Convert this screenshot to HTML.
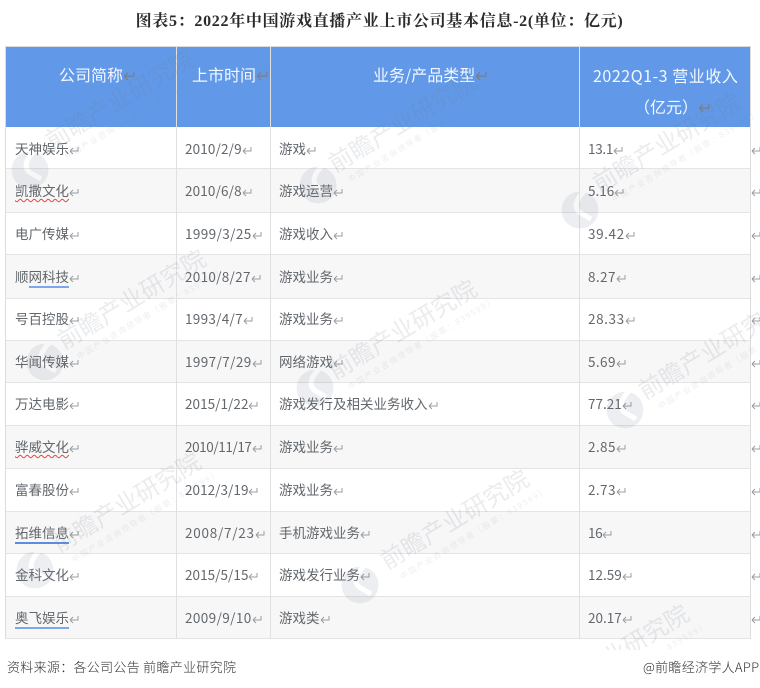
<!DOCTYPE html>
<html lang="zh"><head><meta charset="utf-8"><title>图表5</title>
<style>
html,body{margin:0;padding:0;background:#fff}
body{width:760px;height:688px;overflow:hidden;position:relative;font-family:"Liberation Sans","Noto Sans CJK SC",sans-serif}
.title{position:absolute;left:0;top:10px;width:759px;text-align:center;font:bold 16px/24px "Liberation Serif","Noto Serif CJK SC",serif;color:#2b2b2b;letter-spacing:.7px;white-space:nowrap}
.wrap{position:absolute;left:0;top:0;width:760px;height:688px;filter:blur(.35px)}
.hd{position:absolute;left:6px;top:47px;width:744px;height:80px;background:#6199e8}
.tb{position:absolute;left:5px;top:46px;width:746px;height:593px;border:1px solid #dcdcdc;box-sizing:border-box}
.r{position:absolute;left:6px;width:744px;border-bottom:1.5px solid #e4e4e4;box-sizing:border-box}
.g{background:#f7f7f7}
.v{position:absolute;top:47px;height:592px;width:1.4px;background:#e0e0e0}
.t{position:absolute;font:13.5px/20px "Noto Sans CJK SC",sans-serif;font-weight:400;color:#62676c;white-space:nowrap}
.h{position:absolute;font:16px/22px "Noto Sans CJK SC",sans-serif;font-weight:400;color:#f4f8ff;white-space:nowrap}
svg.a{display:inline-block;width:10px;height:10px;vertical-align:-1px;margin-left:0;fill:none;stroke:#9a9da2;stroke-width:1}
.h svg.a{width:12px;height:12px;stroke:#78808e;stroke-width:1.1;vertical-align:0}
.rd{text-decoration:underline wavy #e8433f;text-decoration-thickness:1px;text-underline-offset:2px}
.bl{border-bottom:2px solid #7ea6ea;padding-bottom:0}
.foot{position:absolute;font:13px/18px "WenQuanYi Zen Hei","Noto Sans CJK SC",sans-serif;font-weight:300;color:#333;white-space:nowrap}
.ov{position:absolute;left:0;top:0}
.ov text{font-family:"Noto Sans CJK SC",sans-serif}
.big{font-size:24px;font-weight:400;fill:#737d90;opacity:.15}
.sm{font-size:8px;fill:#737d90;opacity:.13;letter-spacing:1.6px}
.lg{fill:#737d90;opacity:.13}
</style></head><body>
<div class="title">图表5：2022年中国游戏直播产业上市公司基本信息-2(单位：亿元)</div>
<div class="wrap">
<div class="tb"></div>
<div class="hd"></div>
<div class="r" style="top:127px;height:42px"></div>
<div class="r g" style="top:169px;height:43.5px"></div>
<div class="r" style="top:212.5px;height:42.5px"></div>
<div class="r g" style="top:255px;height:43.5px"></div>
<div class="r" style="top:298.5px;height:42.5px"></div>
<div class="r g" style="top:341px;height:42px"></div>
<div class="r" style="top:383px;height:43px"></div>
<div class="r g" style="top:426px;height:43px"></div>
<div class="r" style="top:469px;height:42.5px"></div>
<div class="r g" style="top:511.5px;height:42.5px"></div>
<div class="r" style="top:554px;height:42.5px"></div>
<div class="r g" style="top:596.5px;height:42px"></div>
<div class="v" style="left:176px"></div>
<div class="v" style="left:270px"></div>
<div class="v" style="left:579px"></div>

<div class="h" style="left:59px;top:63px">公司简称<svg class="a" viewBox="0 0 10 10"><path d="M9 2V6H1M1 6L4 3M1 6L4 9"/></svg></div>
<div class="h" style="left:192px;top:63px">上市时间<svg class="a" viewBox="0 0 10 10"><path d="M9 2V6H1M1 6L4 3M1 6L4 9"/></svg></div>
<div class="h" style="left:373px;top:63px">业务/产品类型<svg class="a" viewBox="0 0 10 10"><path d="M9 2V6H1M1 6L4 3M1 6L4 9"/></svg></div>
<div class="h" style="left:593px;top:64px;letter-spacing:.55px">2022Q1-3 营业收入</div>
<div class="h" style="left:634px;top:95px">（亿元）<svg class="a" viewBox="0 0 10 10"><path d="M9 2V6H1M1 6L4 3M1 6L4 9"/></svg></div>

<div class="t" style="left:15px;top:138px">天神娱乐<svg class="a" viewBox="0 0 10 10"><path d="M9 2V6H1M1 6L4 3M1 6L4 9"/></svg></div>
<div class="t" style="left:185px;top:138px;letter-spacing:.15px">2010/2/9<svg class="a" viewBox="0 0 10 10"><path d="M9 2V6H1M1 6L4 3M1 6L4 9"/></svg></div>
<div class="t" style="left:279px;top:138px">游戏<svg class="a" viewBox="0 0 10 10"><path d="M9 2V6H1M1 6L4 3M1 6L4 9"/></svg></div>
<div class="t" style="left:588px;top:138px;letter-spacing:-.3px">13.1<svg class="a" viewBox="0 0 10 10"><path d="M9 2V6H1M1 6L4 3M1 6L4 9"/></svg></div>
<div class="t" style="left:751px;top:138px"><svg class="a" viewBox="0 0 10 10"><path d="M9 2V6H1M1 6L4 3M1 6L4 9"/></svg></div>

<div class="t" style="left:15px;top:180px"><span class="rd">凯撒文化</span><svg class="a" viewBox="0 0 10 10"><path d="M9 2V6H1M1 6L4 3M1 6L4 9"/></svg></div>
<div class="t" style="left:185px;top:180px;letter-spacing:.15px">2010/6/8<svg class="a" viewBox="0 0 10 10"><path d="M9 2V6H1M1 6L4 3M1 6L4 9"/></svg></div>
<div class="t" style="left:279px;top:180px">游戏运营<svg class="a" viewBox="0 0 10 10"><path d="M9 2V6H1M1 6L4 3M1 6L4 9"/></svg></div>
<div class="t" style="left:588px;top:180px">5.16<svg class="a" viewBox="0 0 10 10"><path d="M9 2V6H1M1 6L4 3M1 6L4 9"/></svg></div>
<div class="t" style="left:751px;top:180px"><svg class="a" viewBox="0 0 10 10"><path d="M9 2V6H1M1 6L4 3M1 6L4 9"/></svg></div>

<div class="t" style="left:15px;top:223px">电广传媒<svg class="a" viewBox="0 0 10 10"><path d="M9 2V6H1M1 6L4 3M1 6L4 9"/></svg></div>
<div class="t" style="left:185px;top:223px;letter-spacing:.4px">1999/3/25<svg class="a" viewBox="0 0 10 10"><path d="M9 2V6H1M1 6L4 3M1 6L4 9"/></svg></div>
<div class="t" style="left:279px;top:223px">游戏收入<svg class="a" viewBox="0 0 10 10"><path d="M9 2V6H1M1 6L4 3M1 6L4 9"/></svg></div>
<div class="t" style="left:588px;top:223px;letter-spacing:.6px">39.42<svg class="a" viewBox="0 0 10 10"><path d="M9 2V6H1M1 6L4 3M1 6L4 9"/></svg></div>
<div class="t" style="left:751px;top:223px"><svg class="a" viewBox="0 0 10 10"><path d="M9 2V6H1M1 6L4 3M1 6L4 9"/></svg></div>

<div class="t" style="left:15px;top:266px">顺<span class="bl">网科技</span><svg class="a" viewBox="0 0 10 10"><path d="M9 2V6H1M1 6L4 3M1 6L4 9"/></svg></div>
<div class="t" style="left:185px;top:266px;letter-spacing:.3px">2010/8/27<svg class="a" viewBox="0 0 10 10"><path d="M9 2V6H1M1 6L4 3M1 6L4 9"/></svg></div>
<div class="t" style="left:279px;top:266px">游戏业务<svg class="a" viewBox="0 0 10 10"><path d="M9 2V6H1M1 6L4 3M1 6L4 9"/></svg></div>
<div class="t" style="left:588px;top:266px;letter-spacing:.4px">8.27<svg class="a" viewBox="0 0 10 10"><path d="M9 2V6H1M1 6L4 3M1 6L4 9"/></svg></div>
<div class="t" style="left:751px;top:266px"><svg class="a" viewBox="0 0 10 10"><path d="M9 2V6H1M1 6L4 3M1 6L4 9"/></svg></div>

<div class="t" style="left:15px;top:308px">号百控股<svg class="a" viewBox="0 0 10 10"><path d="M9 2V6H1M1 6L4 3M1 6L4 9"/></svg></div>
<div class="t" style="left:185px;top:308px;letter-spacing:.3px">1993/4/7<svg class="a" viewBox="0 0 10 10"><path d="M9 2V6H1M1 6L4 3M1 6L4 9"/></svg></div>
<div class="t" style="left:279px;top:308px">游戏业务<svg class="a" viewBox="0 0 10 10"><path d="M9 2V6H1M1 6L4 3M1 6L4 9"/></svg></div>
<div class="t" style="left:588px;top:308px;letter-spacing:.6px">28.33<svg class="a" viewBox="0 0 10 10"><path d="M9 2V6H1M1 6L4 3M1 6L4 9"/></svg></div>
<div class="t" style="left:751px;top:308px"><svg class="a" viewBox="0 0 10 10"><path d="M9 2V6H1M1 6L4 3M1 6L4 9"/></svg></div>

<div class="t" style="left:15px;top:351px">华闻传媒<svg class="a" viewBox="0 0 10 10"><path d="M9 2V6H1M1 6L4 3M1 6L4 9"/></svg></div>
<div class="t" style="left:185px;top:351px;letter-spacing:.4px">1997/7/29<svg class="a" viewBox="0 0 10 10"><path d="M9 2V6H1M1 6L4 3M1 6L4 9"/></svg></div>
<div class="t" style="left:279px;top:351px">网络游戏<svg class="a" viewBox="0 0 10 10"><path d="M9 2V6H1M1 6L4 3M1 6L4 9"/></svg></div>
<div class="t" style="left:588px;top:351px;letter-spacing:.4px">5.69<svg class="a" viewBox="0 0 10 10"><path d="M9 2V6H1M1 6L4 3M1 6L4 9"/></svg></div>
<div class="t" style="left:751px;top:351px"><svg class="a" viewBox="0 0 10 10"><path d="M9 2V6H1M1 6L4 3M1 6L4 9"/></svg></div>

<div class="t" style="left:15px;top:393px">万达电影<svg class="a" viewBox="0 0 10 10"><path d="M9 2V6H1M1 6L4 3M1 6L4 9"/></svg></div>
<div class="t" style="left:185px;top:393px;letter-spacing:.05px">2015/1/22<svg class="a" viewBox="0 0 10 10"><path d="M9 2V6H1M1 6L4 3M1 6L4 9"/></svg></div>
<div class="t" style="left:279px;top:393px">游戏发行及相关业务收入<svg class="a" viewBox="0 0 10 10"><path d="M9 2V6H1M1 6L4 3M1 6L4 9"/></svg></div>
<div class="t" style="left:588px;top:393px">77.21<svg class="a" viewBox="0 0 10 10"><path d="M9 2V6H1M1 6L4 3M1 6L4 9"/></svg></div>
<div class="t" style="left:751px;top:393px"><svg class="a" viewBox="0 0 10 10"><path d="M9 2V6H1M1 6L4 3M1 6L4 9"/></svg></div>

<div class="t" style="left:15px;top:436px"><span class="rd">骅威文化</span><svg class="a" viewBox="0 0 10 10"><path d="M9 2V6H1M1 6L4 3M1 6L4 9"/></svg></div>
<div class="t" style="left:185px;top:436px;letter-spacing:-.4px">2010/11/17<svg class="a" viewBox="0 0 10 10"><path d="M9 2V6H1M1 6L4 3M1 6L4 9"/></svg></div>
<div class="t" style="left:279px;top:436px">游戏业务<svg class="a" viewBox="0 0 10 10"><path d="M9 2V6H1M1 6L4 3M1 6L4 9"/></svg></div>
<div class="t" style="left:588px;top:436px;letter-spacing:.4px">2.85<svg class="a" viewBox="0 0 10 10"><path d="M9 2V6H1M1 6L4 3M1 6L4 9"/></svg></div>
<div class="t" style="left:751px;top:436px"><svg class="a" viewBox="0 0 10 10"><path d="M9 2V6H1M1 6L4 3M1 6L4 9"/></svg></div>

<div class="t" style="left:15px;top:479px">富春股份<svg class="a" viewBox="0 0 10 10"><path d="M9 2V6H1M1 6L4 3M1 6L4 9"/></svg></div>
<div class="t" style="left:185px;top:479px;letter-spacing:.05px">2012/3/19<svg class="a" viewBox="0 0 10 10"><path d="M9 2V6H1M1 6L4 3M1 6L4 9"/></svg></div>
<div class="t" style="left:279px;top:479px">游戏业务<svg class="a" viewBox="0 0 10 10"><path d="M9 2V6H1M1 6L4 3M1 6L4 9"/></svg></div>
<div class="t" style="left:588px;top:479px;letter-spacing:.4px">2.73<svg class="a" viewBox="0 0 10 10"><path d="M9 2V6H1M1 6L4 3M1 6L4 9"/></svg></div>
<div class="t" style="left:751px;top:479px"><svg class="a" viewBox="0 0 10 10"><path d="M9 2V6H1M1 6L4 3M1 6L4 9"/></svg></div>

<div class="t" style="left:15px;top:522px"><span class="bl" style="border-color:#5f8be0">拓维信息</span><svg class="a" viewBox="0 0 10 10"><path d="M9 2V6H1M1 6L4 3M1 6L4 9"/></svg></div>
<div class="t" style="left:185px;top:522px;letter-spacing:.75px">2008/7/23<svg class="a" viewBox="0 0 10 10"><path d="M9 2V6H1M1 6L4 3M1 6L4 9"/></svg></div>
<div class="t" style="left:279px;top:522px">手机游戏业务<svg class="a" viewBox="0 0 10 10"><path d="M9 2V6H1M1 6L4 3M1 6L4 9"/></svg></div>
<div class="t" style="left:588px;top:522px;letter-spacing:-.4px">16<svg class="a" viewBox="0 0 10 10"><path d="M9 2V6H1M1 6L4 3M1 6L4 9"/></svg></div>
<div class="t" style="left:751px;top:522px"><svg class="a" viewBox="0 0 10 10"><path d="M9 2V6H1M1 6L4 3M1 6L4 9"/></svg></div>

<div class="t" style="left:15px;top:564px">金科文化<svg class="a" viewBox="0 0 10 10"><path d="M9 2V6H1M1 6L4 3M1 6L4 9"/></svg></div>
<div class="t" style="left:185px;top:564px;letter-spacing:.05px">2015/5/15<svg class="a" viewBox="0 0 10 10"><path d="M9 2V6H1M1 6L4 3M1 6L4 9"/></svg></div>
<div class="t" style="left:279px;top:564px">游戏发行业务<svg class="a" viewBox="0 0 10 10"><path d="M9 2V6H1M1 6L4 3M1 6L4 9"/></svg></div>
<div class="t" style="left:588px;top:564px">12.59<svg class="a" viewBox="0 0 10 10"><path d="M9 2V6H1M1 6L4 3M1 6L4 9"/></svg></div>
<div class="t" style="left:751px;top:564px"><svg class="a" viewBox="0 0 10 10"><path d="M9 2V6H1M1 6L4 3M1 6L4 9"/></svg></div>

<div class="t" style="left:15px;top:607px"><span class="bl">奥飞娱乐</span><svg class="a" viewBox="0 0 10 10"><path d="M9 2V6H1M1 6L4 3M1 6L4 9"/></svg></div>
<div class="t" style="left:185px;top:607px;letter-spacing:.4px">2009/9/10<svg class="a" viewBox="0 0 10 10"><path d="M9 2V6H1M1 6L4 3M1 6L4 9"/></svg></div>
<div class="t" style="left:279px;top:607px">游戏类<svg class="a" viewBox="0 0 10 10"><path d="M9 2V6H1M1 6L4 3M1 6L4 9"/></svg></div>
<div class="t" style="left:588px;top:607px">20.17<svg class="a" viewBox="0 0 10 10"><path d="M9 2V6H1M1 6L4 3M1 6L4 9"/></svg></div>
<div class="t" style="left:751px;top:607px"><svg class="a" viewBox="0 0 10 10"><path d="M9 2V6H1M1 6L4 3M1 6L4 9"/></svg></div>

<svg class="ov" width="760" height="650" viewBox="0 0 760 650">
<defs><mask id="m"><circle r="18.5" fill="#fff"/><path d="M5 -20Q-9 -6 -1 2L11 9" fill="none" stroke="#000" stroke-width="5"/></mask></defs>
<g transform="translate(52,150) rotate(-31)"><text class="big">前瞻产业研究院</text><text class="sm" x="8" y="16">中国产业咨询领导者（股票：839599）</text></g>
<g transform="translate(335,173) rotate(-31)"><text class="big">前瞻产业研究院</text><text class="sm" x="8" y="16">中国产业咨询领导者（股票：839599）</text></g>
<g transform="translate(599,193) rotate(-31)"><text class="big">前瞻产业研究院</text><text class="sm" x="8" y="16">中国产业咨询领导者（股票：839599）</text></g>
<g transform="translate(64,350) rotate(-31)"><text class="big">前瞻产业研究院</text><text class="sm" x="8" y="16">中国产业咨询领导者（股票：839599）</text></g>
<g transform="translate(335,380) rotate(-31)"><text class="big">前瞻产业研究院</text><text class="sm" x="8" y="16">中国产业咨询领导者（股票：839599）</text></g>
<g transform="translate(645,400) rotate(-31)"><text class="big">前瞻产业研究院</text><text class="sm" x="8" y="16">中国产业咨询领导者（股票：839599）</text></g>
<g transform="translate(59,553) rotate(-31)"><text class="big">前瞻产业研究院</text><text class="sm" x="8" y="16">中国产业咨询领导者（股票：839599）</text></g>
<g transform="translate(387,570) rotate(-31)"><text class="big">前瞻产业研究院</text><text class="sm" x="8" y="16">中国产业咨询领导者（股票：839599）</text></g>
<g transform="translate(547,705) rotate(-31)"><text class="big">前瞻产业研究院</text><text class="sm" x="8" y="16">中国产业咨询领导者（股票：839599）</text></g>
<g class="lg">
<circle transform="translate(30,170)" r="18.5" mask="url(#m)"/>
<circle transform="translate(318,185)" r="18.5" mask="url(#m)"/>
<circle transform="translate(580,210)" r="18.5" mask="url(#m)"/>
<circle transform="translate(45,362)" r="18.5" mask="url(#m)"/>
<circle transform="translate(315,388)" r="18.5" mask="url(#m)"/>
<circle transform="translate(625,410)" r="18.5" mask="url(#m)"/>
<circle transform="translate(35,570)" r="18.5" mask="url(#m)"/>
<circle transform="translate(360,585)" r="18.5" mask="url(#m)"/>
</g>
</svg>
</div>
<div class="foot" style="left:7px;top:658px;letter-spacing:.3px">资料来源：各公司公告 前瞻产业研究院</div>
<div class="foot" style="left:643px;top:658px;letter-spacing:.3px">@前瞻经济学人APP</div>
</body></html>
